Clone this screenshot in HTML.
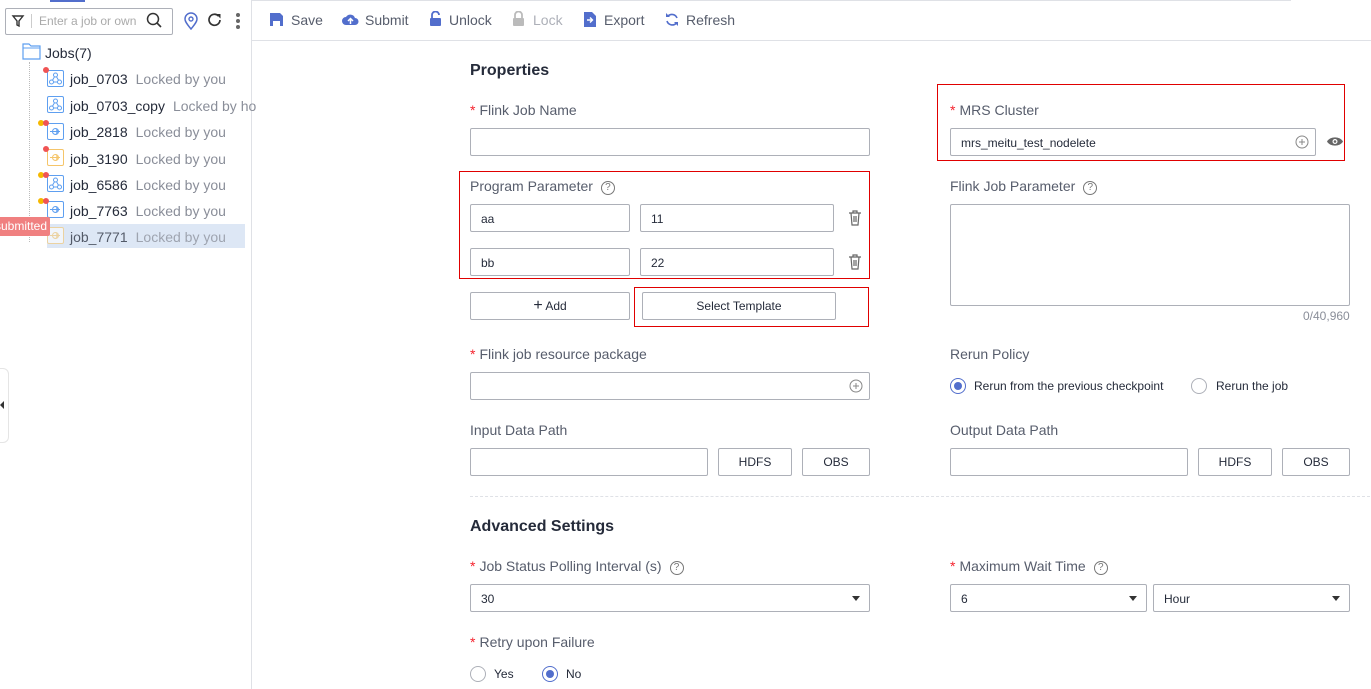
<!DOCTYPE html>
<html><head><meta charset="utf-8"><style>
*{box-sizing:border-box;margin:0;padding:0}
body{width:1371px;height:689px;overflow:hidden;background:#fff;font-family:"Liberation Sans",Arial,sans-serif;position:relative;color:#333}
.a{position:absolute}
.lbl{position:absolute;font-size:14px;color:#575d6c;white-space:nowrap}
.req{color:#f5222d;margin-right:4px}
.in{position:absolute;height:28px;border:1px solid #adb0b8;border-radius:2px;font-size:12px;color:#252b3a;padding:7px 10px;background:#fff}
.btn{position:absolute;height:28px;border:1px solid #adb0b8;border-radius:2px;font-size:12px;color:#252b3a;text-align:center;line-height:26px;background:#fff}
.red{position:absolute;border:1px solid #e00000}
.q{display:inline-block;width:14px;height:14px;border:1px solid #777;border-radius:50%;font-size:10px;line-height:12px;text-align:center;color:#777;margin-left:8px;vertical-align:1px}
.tb{position:absolute;top:12px;font-size:14px;color:#575d6c;white-space:nowrap}
.node{position:absolute;left:70px;font-size:14px;color:#252b3a;white-space:nowrap}
.node span{color:#8a8e99;margin-left:8px}
.ic{position:absolute;left:47px}
.dot{position:absolute;width:6px;height:6px;border-radius:50%}
.dd{position:absolute;right:9px;top:11px;border-left:4px solid transparent;border-right:4px solid transparent;border-top:5px solid #333}
.radio{position:absolute;width:16px;height:16px;border:1px solid #adb0b8;border-radius:50%}
.radio.on{border-color:#526ecc}
.radio.on::after{content:"";position:absolute;left:3px;top:3px;width:8px;height:8px;border-radius:50%;background:#526ecc}
.rt{position:absolute;font-size:12px;color:#252b3a;white-space:nowrap}
.h{position:absolute;font-size:16px;font-weight:bold;color:#252b3a}
</style></head><body>
<svg width="0" height="0" style="position:absolute"><defs>
<g id="flow"><rect x="0.5" y="0.5" width="16" height="16" rx="1.5" fill="#fff" stroke="#5e9ff0"/><circle cx="8.5" cy="5" r="2" fill="none" stroke="#5e9ff0"/><circle cx="4.5" cy="12" r="2" fill="none" stroke="#5e9ff0"/><circle cx="12.5" cy="12" r="2" fill="none" stroke="#5e9ff0"/><path d="M7.5 6.8L5.5 10.2M9.5 6.8l2 3.4M6.5 12h4" stroke="#5e9ff0"/></g>
<g id="strm"><rect x="0.5" y="0.5" width="16" height="16" rx="1.5" fill="#fff" stroke="#5e9ff0"/><circle cx="8.5" cy="8.5" r="3" fill="none" stroke="#5e9ff0"/><path d="M3 8.5h10M9 6.5l2 2-2 2" stroke="#5e9ff0" fill="none"/></g>
<g id="strmo"><rect x="0.5" y="0.5" width="16" height="16" rx="1.5" fill="#fff" stroke="#f5c56a"/><circle cx="8.5" cy="8.5" r="3" fill="none" stroke="#f5c56a"/><path d="M3 8.5h10M9 6.5l2 2-2 2" stroke="#f5c56a" fill="none"/></g>
</defs></svg>
<div class="a" style="left:50px;top:0;width:35px;height:2px;background:#526ecc"></div>
<div class="a" style="left:251px;top:0;width:1040px;height:1px;background:#dfe1e6"></div>
<div class="a" style="left:251px;top:0;width:1px;height:689px;background:#dfe1e6"></div>
<div class="a" style="left:252px;top:40px;width:1119px;height:1px;background:#dfe1e6"></div>
<!-- search -->
<div class="a" style="left:5px;top:8px;width:168px;height:27px;border:1px solid #adb0b8;border-radius:2px"></div>
<svg class="a" style="left:11px;top:14px" width="14" height="14" viewBox="0 0 14 14"><path d="M2 2h10L8 7v5L6 11V7z" fill="none" stroke="#333" stroke-width="1.4"/></svg>
<div class="a" style="left:31px;top:14px;width:1px;height:14px;background:#ccc"></div>
<div class="a" style="left:39px;top:14px;font-size:12px;color:#aaa">Enter a job or own</div>
<svg class="a" style="left:146px;top:12px" width="16" height="16"><circle cx="7" cy="7" r="5.5" fill="none" stroke="#333" stroke-width="1.5"/><path d="M11 11l4 4" stroke="#333" stroke-width="1.6"/></svg>
<svg class="a" style="left:183px;top:12px" width="16" height="18"><path d="M8 17C3 11 2 9 2 7a6 6 0 0112 0c0 2-1 4-6 10z" fill="none" stroke="#526ecc" stroke-width="1.5"/><circle cx="8" cy="7" r="2" fill="none" stroke="#526ecc" stroke-width="1.4"/></svg>
<svg class="a" style="left:207px;top:12px" width="16" height="16"><path d="M13 8A5.5 5.5 0 1 1 11.5 4" fill="none" stroke="#333" stroke-width="1.7"/><path d="M9 2h4.5v4.5z" fill="#333"/></svg>
<div class="a" style="left:236px;top:13px;width:4px;height:4px;border-radius:50%;background:#666;box-shadow:0 6px 0 #666,0 12px 0 #666"></div>
<!-- tree -->
<svg class="a" style="left:22px;top:43px" width="19" height="17"><path d="M1 1h6l2 2h9v13H1z" fill="none" stroke="#5e9ff0" stroke-width="1.2"/><path d="M1 5h17" stroke="#5e9ff0"/></svg>
<div class="a" style="left:45px;top:45px;font-size:14px;color:#252b3a">Jobs(7)</div>
<div class="a" style="left:29px;top:62px;width:0;height:180px;border-left:1px dotted #bbb"></div>
<div class="a" style="left:47px;top:224px;width:198px;height:24px;background:#dde7f5"></div>

<svg class="ic" style="top:70px" width="17" height="17"><use href="#flow"/></svg><div class="dot" style="left:43px;top:67px;background:#f05454"></div>
<div class="node" style="top:71px">job_0703<span>Locked by you</span></div>
<svg class="ic" style="top:96px" width="17" height="17"><use href="#flow"/></svg>
<div class="node" style="top:98px">job_0703_copy<span>Locked by ho</span></div>
<svg class="ic" style="top:123px" width="17" height="17"><use href="#strm"/></svg><div class="dot" style="left:38px;top:120px;background:#f5b800"></div><div class="dot" style="left:43px;top:120px;background:#f05454"></div>
<div class="node" style="top:124px">job_2818<span>Locked by you</span></div>
<svg class="ic" style="top:149px" width="17" height="17"><use href="#strmo"/></svg><div class="dot" style="left:43px;top:146px;background:#f05454"></div>
<div class="node" style="top:151px">job_3190<span>Locked by you</span></div>
<svg class="ic" style="top:175px" width="17" height="17"><use href="#flow"/></svg><div class="dot" style="left:38px;top:172px;background:#f5b800"></div><div class="dot" style="left:43px;top:172px;background:#f05454"></div>
<div class="node" style="top:177px">job_6586<span>Locked by you</span></div>
<svg class="ic" style="top:201px" width="17" height="17"><use href="#strm"/></svg><div class="dot" style="left:38px;top:198px;background:#f5b800"></div><div class="dot" style="left:43px;top:198px;background:#f05454"></div>
<div class="node" style="top:203px">job_7763<span>Locked by you</span></div>
<svg class="ic" style="top:227px;opacity:.6" width="17" height="17"><use href="#strmo"/></svg>
<div class="node" style="top:229px;opacity:.75">job_7771<span>Locked by you</span></div>
<div class="a" style="left:0;top:217px;width:50px;height:19px;background:#f08080;border-radius:0 2px 2px 0;overflow:hidden"><div style="position:absolute;right:3px;top:2px;color:#fff;font-size:12px;white-space:nowrap">submitted</div></div>
<div class="a" style="left:0;top:368px;width:9px;height:75px;border:1px solid #e5e5e5;border-left:none;border-radius:0 6px 6px 0"></div>
<div class="a" style="left:0;top:401px;border-top:4px solid transparent;border-bottom:4px solid transparent;border-right:4px solid #333"></div>
<!-- toolbar -->
<svg class="a" style="left:270px;top:13px" width="13" height="13"><path d="M0 0h10l3 3v10H0z" fill="#526ecc"/><rect x="3" y="8" width="7" height="5" fill="#fff"/></svg>
<div class="tb" style="left:291px">Save</div>
<svg class="a" style="left:342px;top:13px" width="17" height="13"><path d="M4 12a4 4 0 010-8 5 5 0 019 1 3.5 3.5 0 010 7z" fill="#526ecc"/><path d="M8.5 11V6M6 8l2.5-2.5L11 8" stroke="#fff" stroke-width="1.5" fill="none"/></svg>
<div class="tb" style="left:365px">Submit</div>
<svg class="a" style="left:429px;top:11px" width="13" height="16"><path d="M3 7V4a3.5 3.5 0 017 0" fill="none" stroke="#526ecc" stroke-width="1.8"/><rect x="1" y="7" width="11" height="8" rx="1" fill="#526ecc"/></svg>
<div class="tb" style="left:449px">Unlock</div>
<svg class="a" style="left:512px;top:11px" width="13" height="16"><path d="M3 7V4a3.5 3.5 0 017 0v3" fill="none" stroke="#bbb" stroke-width="1.8"/><rect x="1" y="7" width="11" height="8" rx="1" fill="#bbb"/></svg>
<div class="tb" style="left:533px;color:#adb0b8">Lock</div>
<svg class="a" style="left:584px;top:12px" width="12" height="15"><path d="M0 0h8l4 4v11H0z" fill="#526ecc"/><path d="M3 8h5M6 5.5L8.5 8 6 10.5" stroke="#fff" stroke-width="1.4" fill="none"/></svg>
<div class="tb" style="left:604px">Export</div>
<svg class="a" style="left:665px;top:12px" width="14" height="15"><path d="M12 6A5.5 5.5 0 003 4M2 9a5.5 5.5 0 009 2.5" fill="none" stroke="#526ecc" stroke-width="1.6"/><path d="M1 1v4h4zM13 14v-4H9z" fill="#526ecc"/></svg>
<div class="tb" style="left:686px">Refresh</div>
<!-- form -->
<div class="h" style="left:470px;top:62px">Properties</div>
<div class="lbl" style="left:470px;top:102px"><span class="req">*</span>Flink Job Name</div>
<div class="in" style="left:470px;top:128px;width:400px"></div>
<div class="red" style="left:937px;top:84px;width:408px;height:77px"></div>
<div class="lbl" style="left:950px;top:102px"><span class="req">*</span>MRS Cluster</div>
<div class="in" style="left:950px;top:128px;width:366px">mrs_meitu_test_nodelete</div>
<svg class="a" style="left:1295px;top:135px" width="14" height="14"><circle cx="7" cy="7" r="6" fill="none" stroke="#888"/><path d="M7 4v6M4 7h6" stroke="#888"/></svg>
<svg class="a" style="left:1327px;top:136px" width="16" height="11"><path d="M0 5.5C3 0 13 0 16 5.5 13 11 3 11 0 5.5z" fill="#666"/><circle cx="8" cy="5.5" r="2.5" fill="#fff"/><circle cx="8" cy="5.5" r="1.3" fill="#666"/></svg>

<div class="red" style="left:459px;top:171px;width:411px;height:108px"></div>
<div class="lbl" style="left:470px;top:178px">Program Parameter<span class="q">?</span></div>
<div class="in" style="left:470px;top:204px;width:160px">aa</div>
<div class="in" style="left:640px;top:204px;width:194px">11</div>
<div class="in" style="left:470px;top:248px;width:160px">bb</div>
<div class="in" style="left:640px;top:248px;width:194px">22</div>
<svg class="a" style="left:848px;top:210px" width="14" height="16"><path d="M1 3h12M5 3V1h4v2M3 3l1 12h6l1-12M6 6v6M8 6v6" fill="none" stroke="#666" stroke-width="1.2"/></svg>
<svg class="a" style="left:848px;top:254px" width="14" height="16"><path d="M1 3h12M5 3V1h4v2M3 3l1 12h6l1-12M6 6v6M8 6v6" fill="none" stroke="#666" stroke-width="1.2"/></svg>
<div class="btn" style="left:470px;top:292px;width:160px"><span style="font-size:16px">+</span> Add</div>
<div class="red" style="left:634px;top:287px;width:235px;height:40px"></div>
<div class="btn" style="left:642px;top:292px;width:194px">Select Template</div>

<div class="lbl" style="left:950px;top:178px">Flink Job Parameter<span class="q">?</span></div>
<div class="in" style="left:950px;top:204px;width:400px;height:102px"></div>
<div class="a" style="left:1303px;top:309px;font-size:12px;color:#8a8e99">0/40,960</div>

<div class="lbl" style="left:470px;top:346px"><span class="req">*</span>Flink job resource package</div>
<div class="in" style="left:470px;top:372px;width:400px"></div>
<svg class="a" style="left:849px;top:379px" width="14" height="14"><circle cx="7" cy="7" r="6" fill="none" stroke="#888"/><path d="M7 4v6M4 7h6" stroke="#888"/></svg>
<div class="lbl" style="left:950px;top:346px">Rerun Policy</div>
<div class="radio on" style="left:950px;top:378px"></div>
<div class="rt" style="left:974px;top:379px">Rerun from the previous checkpoint</div>
<div class="radio" style="left:1191px;top:378px"></div>
<div class="rt" style="left:1216px;top:379px">Rerun the job</div>

<div class="lbl" style="left:470px;top:422px">Input Data Path</div>
<div class="in" style="left:470px;top:448px;width:238px"></div>
<div class="btn" style="left:718px;top:448px;width:74px">HDFS</div>
<div class="btn" style="left:802px;top:448px;width:68px">OBS</div>
<div class="lbl" style="left:950px;top:422px">Output Data Path</div>
<div class="in" style="left:950px;top:448px;width:238px"></div>
<div class="btn" style="left:1198px;top:448px;width:74px">HDFS</div>
<div class="btn" style="left:1282px;top:448px;width:68px">OBS</div>

<div class="a" style="left:470px;top:496px;width:900px;border-top:1px dashed #dfe1e6"></div>
<div class="h" style="left:470px;top:518px">Advanced Settings</div>
<div class="lbl" style="left:470px;top:558px"><span class="req">*</span>Job Status Polling Interval (s)<span class="q">?</span></div>
<div class="in" style="left:470px;top:584px;width:400px">30<div class="dd"></div></div>
<div class="lbl" style="left:950px;top:558px"><span class="req">*</span>Maximum Wait Time<span class="q">?</span></div>
<div class="in" style="left:950px;top:584px;width:197px">6<div class="dd"></div></div>
<div class="in" style="left:1153px;top:584px;width:197px">Hour<div class="dd"></div></div>
<div class="lbl" style="left:470px;top:634px"><span class="req">*</span>Retry upon Failure</div>
<div class="radio" style="left:470px;top:666px"></div>
<div class="rt" style="left:494px;top:667px">Yes</div>
<div class="radio on" style="left:542px;top:666px"></div>
<div class="rt" style="left:566px;top:667px">No</div>
</body></html>
